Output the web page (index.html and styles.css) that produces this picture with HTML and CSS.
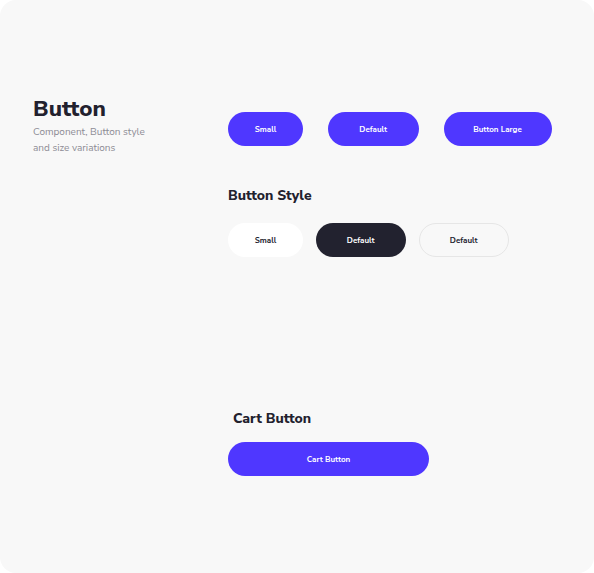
FILE: index.html
```html
<!DOCTYPE html>
<html>
<head>
<meta charset="utf-8">
<link rel="stylesheet" href="styles.css">
</head>
<body>
<div class="card">
  <div class="intro">
    <h1 class="title">Button</h1>
    <p class="desc">Component, Button style<br>and size variations</p>
  </div>
  <div class="main">
    <div class="row row-sizes">
      <button class="btn btn-primary w-small">Small</button>
      <button class="btn btn-primary w-default">Default</button>
      <button class="btn btn-primary w-large">Button Large</button>
    </div>
    <h2 class="section-title">Button Style</h2>
    <div class="row row-styles">
      <button class="btn btn-white w-small">Small</button>
      <button class="btn btn-dark w-default">Default</button>
      <button class="btn btn-outline w-default">Default</button>
    </div>
    <h2 class="section-title cart-title">Cart Button</h2>
    <div class="row">
      <button class="btn btn-primary w-cart">Cart Button</button>
    </div>
  </div>
</div>
</body>
</html>
```

FILE: styles.css
```css
html, body {
  margin: 0;
  padding: 0;
  background: #ffffff;
}
body {
  font-family: "Nunito Sans", Lato, "Open Sans", sans-serif;
}
.card {
  box-sizing: border-box;
  width: 594px;
  height: 573px;
  background: #f8f8f8;
  border-radius: 16px;
  display: flex;
  padding: 96px 0 0 33px;
}
.intro {
  width: 195px;
  flex: none;
}
.title {
  margin: 0;
  font-size: 22.5px;
  line-height: 26px;
  font-weight: 800;
  color: #22212e;
}
.desc {
  margin: 2px 0 0;
  font-size: 10px;
  line-height: 16px;
  color: #8d8c95;
}
.main {
  display: flex;
  flex-direction: column;
  align-items: flex-start;
  padding-top: 16px;
}
.row {
  display: flex;
}
.row-sizes {
  gap: 25px;
}
.row-styles {
  gap: 12.5px;
}
.section-title {
  margin: 41px 0 18px;
  font-size: 14px;
  line-height: 18px;
  font-weight: 800;
  color: #22212e;
}
.cart-title {
  margin: 153px 0 14px 5px;
}
.btn {
  box-sizing: border-box;
  height: 34px;
  border-radius: 17px;
  border: 1px solid transparent;
  font-family: inherit;
  font-size: 8px;
  font-weight: 700;
  padding: 0;
  cursor: pointer;
}
.btn-primary {
  background: #4f37ff;
  color: #ffffff;
}
.btn-white {
  background: #ffffff;
  color: #22212e;
}
.btn-dark {
  background: #22222f;
  color: #ffffff;
}
.btn-outline {
  background: transparent;
  border-color: #e6e6e6;
  color: #22212e;
}
.w-small { width: 75px; }
.w-default { width: 90.5px; }
.w-large { width: 108px; }
.w-cart { width: 201px; }
```
